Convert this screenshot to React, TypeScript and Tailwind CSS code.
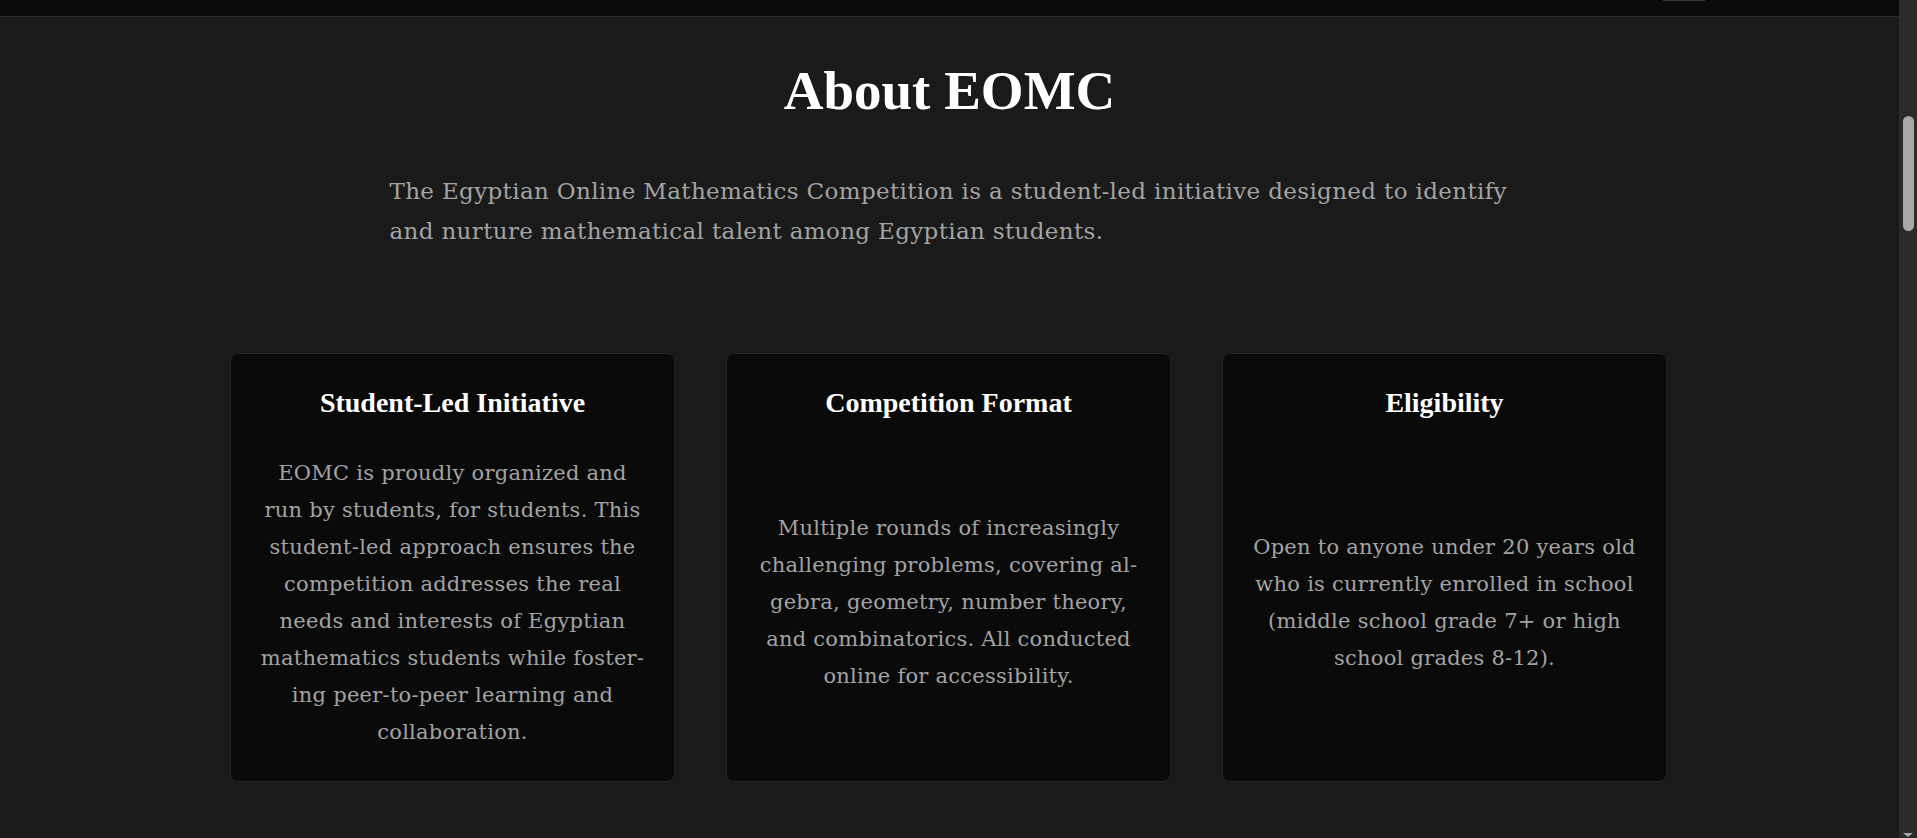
import React from 'react';

const cards = [
  {
    title: 'Student-Led Initiative',
    lines: [
      'EOMC is proudly organized and',
      'run by students, for students. This',
      'student-led approach ensures the',
      'competition addresses the real',
      'needs and interests of Egyptian',
      'mathematics students while foster-',
      'ing peer-to-peer learning and',
      'collaboration.',
    ],
  },
  {
    title: 'Competition Format',
    lines: [
      'Multiple rounds of increasingly',
      'challenging problems, covering al-',
      'gebra, geometry, number theory,',
      'and combinatorics. All conducted',
      'online for accessibility.',
    ],
  },
  {
    title: 'Eligibility',
    lines: [
      'Open to anyone under 20 years old',
      'who is currently enrolled in school',
      '(middle school grade 7+ or high',
      'school grades 8-12).',
    ],
  },
];

export default function App() {
  return (
    <div className="flex h-screen w-full overflow-hidden bg-[#1a1a1a]">
      <main className="flex-1 min-w-0">
        <header className="h-[17px] bg-[#0b0b0b] border-b border-[#2c2c2c] flex justify-end pr-[194px]">
          <div className="h-px w-[42px] bg-[#3a3a3a]"></div>
        </header>

        <section className="pt-[41px]">
          <h1 className="text-center text-[55px] leading-[1.2] font-bold text-white font-['Liberation_Serif',serif]">
            About EOMC
          </h1>
          <p className="mt-[47px] max-w-[1120px] mx-auto text-[23px] leading-[40px] tracking-[0.35px] text-[#a3a3a3] font-['DejaVu_Serif',serif] whitespace-nowrap">
            The Egyptian Online Mathematics Competition is a student-led initiative designed to identify
            <br />
            and nurture mathematical talent among Egyptian students.
          </p>

          <div className="mt-[102px] max-w-[1437px] mx-auto grid grid-cols-3 gap-[51px] -translate-x-px">
            {cards.map((card) => (
              <div
                key={card.title}
                className="flex flex-col bg-[#0a0a0a] border border-[#262626] rounded-lg px-8 pt-8 pb-[30px]">
                <h3 className="text-center text-[28px] leading-[1.2] font-bold text-white font-['Liberation_Serif',serif] mb-[35px]">
                  {card.title}
                </h3>
                <div className="flex-1 flex items-center justify-center">
                  <p className="text-center text-[21px] leading-[37px] tracking-[0.25px] text-[#a3a3a3] font-['DejaVu_Serif',serif] whitespace-nowrap">
                    {card.lines.map((line, i) => (
                      <span key={i} className="block">
                        {line}
                      </span>
                    ))}
                  </p>
                </div>
              </div>
            ))}
          </div>
        </section>
      </main>

      <aside className="w-[18px] shrink-0 bg-[#2b2b2b] flex flex-col items-center">
        <div className="mt-[116px] h-[115px] w-[11px] rounded-full bg-[#a8a8a8]"></div>
        <div className="flex-1"></div>
        <div className="mb-px w-0 h-0 border-l-[5px] border-r-[5px] border-t-[4px] border-l-transparent border-r-transparent border-t-[#a8a8a8]"></div>
      </aside>
    </div>
  );
}
